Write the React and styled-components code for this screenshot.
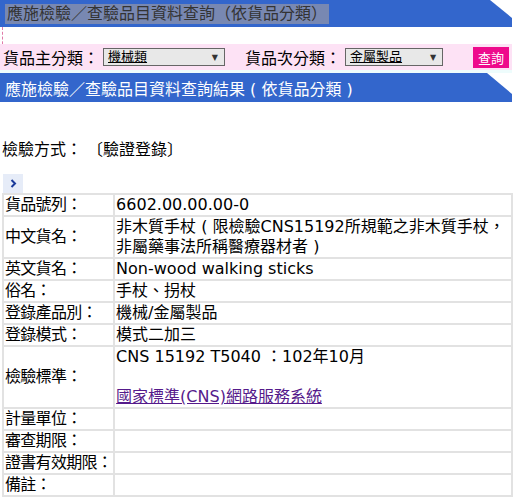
import React from 'react'
import styled, { createGlobalStyle } from 'styled-components'

const GlobalStyle = createGlobalStyle`
    body {
        margin: 0;
        background: #fff;
        font-family: "DejaVu Sans", "Noto Sans CJK TC", sans-serif;
        font-size: 16px;
        color: #000;
    }
`;

const Page = styled.div`
    width: 512px;
`;

/* blue title bar with the clipped top-right corner */
const TitleBar = styled.div`
    background: #3366cc;
    height: ${props => props.h}px;
    display: flex;
    align-items: center;
    padding-left: ${props => props.pad}px;
    clip-path: polygon(0 0, calc(100% - ${props => props.cut}px) 0, 100% ${props => props.drop}px, 100% 100%, 0 100%);
    color: ${props => props.light ? '#fff' : '#3c3c3c'};
    font-size: 16px;
    white-space: pre;
`;

const Highlight = styled.span`
    background: #7888b2;
    line-height: 20px;
    padding: 0 2px;
    color: #333;
`;

const FormArea = styled.form`
    margin: 0;
    border-left: 1px dashed #e07aa8;
    margin-left: 2px;
    padding-top: 17px;
`;

const FilterRow = styled.div`
    background: #fde2f5;
    height: 26px;
    display: flex;
    align-items: center;
    padding-left: 3px;
    margin-left: -3px;
    border-bottom: 3px solid #eefcfc;
`;

const FilterLabel = styled.span`
    margin-right: 4px;
    white-space: nowrap;
`;

const SelectBox = styled.div`
    width: ${props => props.w}px;
    height: 16px;
    border: 1px solid #666;
    background: #e8e8e8;
    display: flex;
    align-items: center;
    justify-content: space-between;
    padding: 0 6px 0 4px;
    box-sizing: content-box;
    margin-right: ${props => props.gap}px;
    font-size: 13px;
`;

const SelectText = styled.span`
    text-decoration: underline;
    line-height: 16px;
`;

const Arrow = styled.span`
    font-size: 8px;
    color: #333;
`;

const SearchButton = styled.button`
    background: #ee0a8c;
    color: #fff;
    border: none;
    height: 21px;
    padding: 0 5px;
    font-family: inherit;
    font-size: 13px;
    margin-left: auto;
    margin-right: 3px;
`;

const MethodLine = styled.div`
    margin: 38px 0 0 2px;
    line-height: 20px;
    white-space: pre;
`;

const Toggle = styled.div`
    width: 20px;
    height: 19px;
    margin: 14px 0 0 3px;
    background: #e6ecf8;
    display: flex;
    align-items: center;
    justify-content: center;
`;

const InfoTable = styled.table`
    width: 511px;
    margin-left: 2px;
    border-collapse: separate;
    border-spacing: 0;
    border: 1px solid #e2e2e2;
`;

const Cell = styled.td`
    border: 1px solid #e2e2e2;
    padding: 0 1px;
    line-height: 20px;
    vertical-align: middle;
    width: ${props => props.label ? '100px' : 'auto'};
    white-space: ${props => props.label ? 'nowrap' : 'normal'};
    letter-spacing: ${props => props.label ? '-0.7px' : '0'};
`;

const StdLink = styled.a`
    color: #551a8b;
    text-decoration: underline;
`;

const rows = [
    ['貨品號列：', '6602.00.00.00-0'],
    ['中文貨名：', '非木質手杖 ( 限檢驗CNS15192所規範之非木質手杖，非屬藥事法所稱醫療器材者 )'],
    ['英文貨名：', 'Non-wood walking sticks'],
    ['俗名：', '手杖、拐杖'],
    ['登錄產品別：', '機械/金屬製品'],
    ['登錄模式：', '模式二加三'],
    ['檢驗標準：', 'std'],
    ['計量單位：', ''],
    ['審查期限：', ''],
    ['證書有效期限：', ''],
    ['備註：', ''],
];

export default function App() {
    return (
        <Page>
            <GlobalStyle />
            <TitleBar h={27} pad={5} cut={22} drop={18}>
                <Highlight>應施檢驗／查驗品目資料查詢（依貨品分類）</Highlight>
            </TitleBar>
            <FormArea onSubmit={e => e.preventDefault()}>
                <FilterRow>
                    <FilterLabel>貨品主分類：</FilterLabel>
                    <SelectBox w={110} gap={20}>
                        <SelectText>機械類</SelectText>
                        <Arrow>▼</Arrow>
                    </SelectBox>
                    <FilterLabel>貨品次分類：</FilterLabel>
                    <SelectBox w={86} gap={0}>
                        <SelectText>金屬製品</SelectText>
                        <Arrow>▼</Arrow>
                    </SelectBox>
                    <SearchButton type="submit">查詢</SearchButton>
                </FilterRow>
            </FormArea>
            <TitleBar h={29} pad={5} cut={25} drop={21} light>
                應施檢驗／查驗品目資料查詢結果 ( 依貨品分類 )
            </TitleBar>
            <MethodLine>檢驗方式： 〔驗證登錄〕</MethodLine>
            <Toggle>
                <svg width="7" height="9" viewBox="0 0 7 9">
                    <path d="M1.5 1 L5 4.5 L1.5 8" stroke="#1a3a9a" strokeWidth="2" fill="none" />
                </svg>
            </Toggle>
            <InfoTable>
                <tbody>
                    {rows.map(([label, value]) => (
                        <tr key={label}>
                            <Cell label>{label}</Cell>
                            {value === 'std' ? (
                                <Cell>
                                    CNS 15192 T5040 ：102年10月
                                    <br />
                                    <br />
                                    <StdLink href="#">國家標準(CNS)網路服務系統</StdLink>
                                </Cell>
                            ) : (
                                <Cell>{value}</Cell>
                            )}
                        </tr>
                    ))}
                </tbody>
            </InfoTable>
        </Page>
    )
}
